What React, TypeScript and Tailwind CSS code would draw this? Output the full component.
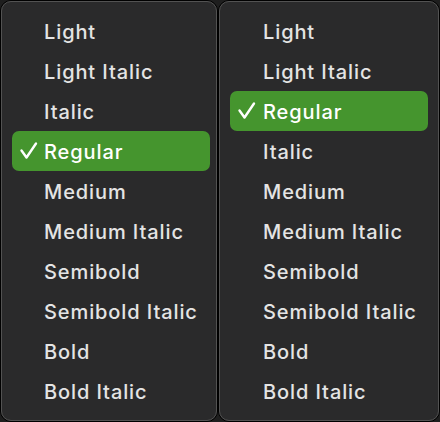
import React from 'react';

const left = ['Light', 'Light Italic', 'Italic', 'Regular', 'Medium', 'Medium Italic', 'Semibold', 'Semibold Italic', 'Bold', 'Bold Italic'];
const right = ['Light', 'Light Italic', 'Regular', 'Italic', 'Medium', 'Medium Italic', 'Semibold', 'Semibold Italic', 'Bold', 'Bold Italic'];

function Check() {
  return (
    <svg width="20" height="20" viewBox="0 0 20 20" className="absolute left-[7px] top-[10px]">
      <polyline points="2.5,9.5 7.5,16.5 17,2.5" fill="none" stroke="white" strokeWidth="2.4" strokeLinecap="round" strokeLinejoin="round" />
    </svg>
  );
}

function Menu({ items, selected, width, textPad }: { items: string[]; selected: string; width: string; textPad: string }) {
  return (
    <div className={`${width} h-[422px] rounded-[11px] border border-black`}>
      <div className="h-full rounded-[10px] border border-[#525252] bg-[#2a2a2b] pt-[9px] pl-[10px]">
        {items.map((it) => {
          const on = it === selected;
          return (
            <div
              key={it}
              className={`relative flex h-[40px] w-[198px] items-center rounded-[7px] ${textPad} ${on ? 'bg-[#45952e] text-white' : 'text-[#e4e4e4]'}`}
            >
              {on && <Check />}
              <span className="pt-[1px]">{it}</span>
            </div>
          );
        })}
      </div>
    </div>
  );
}

export default function App() {
  return (
    <div
      className="flex h-[422px] w-[440px] bg-[#1e1e1e] text-[20px] font-[450] leading-none tracking-[0.9px]"
      style={{ fontFamily: 'Inter, "Noto Sans", sans-serif' }}
    >
      <Menu items={left} selected="Regular" width="w-[218px]" textPad="pl-[32px]" />
      <Menu items={right} selected="Regular" width="w-[222px]" textPad="pl-[33px]" />
    </div>
  );
}
